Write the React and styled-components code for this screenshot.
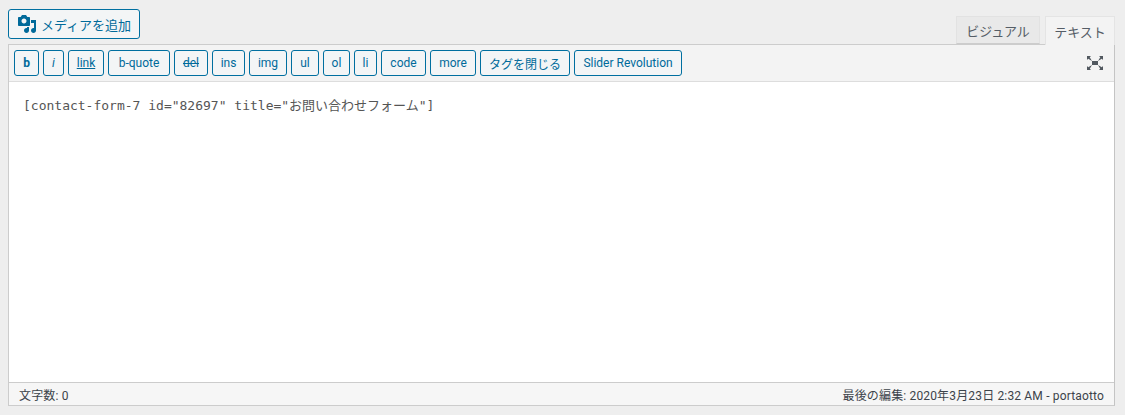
import React from "react";
import styled, { createGlobalStyle } from "styled-components";

const GlobalStyle = createGlobalStyle`
  html, body {
    margin: 0;
    padding: 0;
    background: #eeeeee;
  }
`;

const sans = `Roboto, "Liberation Sans", "Noto Sans CJK JP", sans-serif`;

const Page = styled.div`
  box-sizing: border-box;
  width: 1125px;
  height: 415px;
  padding: 10px 10px 9px 8px;
  background: #eeeeee;
  font-family: ${sans};
  display: flex;
  flex-direction: column;
`;

const TopBar = styled.div`
  display: flex;
  justify-content: space-between;
  align-items: flex-end;
  height: 34px;
`;

const MediaButton = styled.button`
  box-sizing: border-box;
  display: flex;
  align-items: center;
  gap: 4px;
  width: 132px;
  height: 30px;
  margin-bottom: 5px;
  padding: 0 0 0 8px;
  background: #f3f5f6;
  border: 1px solid #006fa0;
  border-radius: 3px;
  color: #006a9a;
  font-family: inherit;
  font-size: 13px;
  svg {
    width: 20px;
    height: 20px;
    fill: #006a9a;
  }
`;

const Tabs = styled.div`
  display: flex;
  gap: 5px;
  position: relative;
  top: 1px;
`;

const Tab = styled.div`
  box-sizing: border-box;
  width: ${(p) => p.$width}px;
  height: ${(p) => (p.$active ? 29 : 28)}px;
  margin-bottom: ${(p) => (p.$active ? 0 : 1)}px;
  display: flex;
  align-items: center;
  justify-content: center;
  border: 1px solid ${(p) => (p.$active ? "#e4e4e4" : "#e2e2e2")};
  border-bottom: ${(p) => (p.$active ? "none" : "1px solid #cccccc")};
  background: ${(p) => (p.$active ? "#f3f3f3" : "#e9e9e9")};
  color: #555d66;
  font-size: 13px;
`;

const Editor = styled.div`
  box-sizing: border-box;
  flex: 1;
  border: 1px solid #cccccc;
  border-right-color: #c4c4c4;
  display: flex;
  flex-direction: column;
  background: #ffffff;
`;

const Toolbar = styled.div`
  box-sizing: border-box;
  height: 37px;
  padding: 5px 0 0 5px;
  display: flex;
  gap: 4px;
  align-items: flex-start;
  background: #f3f3f3;
  border-bottom: 1px solid #dddddd;
`;

const QButton = styled.button`
  box-sizing: border-box;
  width: ${(p) => p.$width}px;
  height: 26px;
  padding: 0;
  background: #f3f5f6;
  border: 1px solid #006fa0;
  border-radius: 3px;
  color: #006a9a;
  font-family: inherit;
  font-size: 12px;
  font-weight: ${(p) => (p.$bold ? 700 : 400)};
  font-style: ${(p) => (p.$italic ? "italic" : "normal")};
  text-decoration: ${(p) => p.$line || "none"};
`;

const ExpandButton = styled.div`
  margin-left: auto;
  margin-right: 9px;
  margin-top: 3px;
  svg {
    display: block;
    width: 20px;
    height: 20px;
    fill: #50575e;
  }
`;

const TextArea = styled.div`
  flex: 1;
  padding: 15px 14px;
  font-family: "DejaVu Sans Mono", "Noto Sans CJK JP", monospace;
  font-size: 13px;
  line-height: 18px;
  color: #555555;
`;

const StatusBar = styled.div`
  box-sizing: border-box;
  height: 23px;
  padding: 0 10px;
  display: flex;
  align-items: center;
  justify-content: space-between;
  background: #f6f6f6;
  border-top: 1px solid #cccccc;
  color: #3c434a;
  font-size: 12px;
  letter-spacing: 0.16px;
`;

const tags = [
  { label: "b", width: 25, bold: true },
  { label: "i", width: 21, italic: true },
  { label: "link", width: 36, line: "underline" },
  { label: "b-quote", width: 62 },
  { label: "del", width: 34, line: "line-through" },
  { label: "ins", width: 33 },
  { label: "img", width: 38 },
  { label: "ul", width: 28 },
  { label: "ol", width: 27 },
  { label: "li", width: 23 },
  { label: "code", width: 45 },
  { label: "more", width: 46 },
  { label: "タグを閉じる", width: 90 },
  { label: "Slider Revolution", width: 108 },
];

const App = () => {
  return (
    <Page>
      <GlobalStyle />
      <TopBar>
        <MediaButton>
          <svg viewBox="0 0 20 20">
            <path d="M13 11V4c0-.55-.45-1-1-1h-1.67L9 1H5L3.67 3H2c-.55 0-1 .45-1 1v7c0 .55.45 1 1 1h10c.55 0 1-.45 1-1zM7 4.5c1.38 0 2.5 1.12 2.5 2.5S8.38 9.5 7 9.5 4.5 8.38 4.5 7 5.62 4.5 7 4.5zM14 6h5v10.5c0 1.38-1.12 2.5-2.5 2.5S14 17.88 14 16.5s1.12-2.5 2.5-2.5c.17 0 .34.02.5.05V9h-3V6zm-4 8.05V13h2v3.5c0 1.38-1.12 2.5-2.5 2.5S7 17.88 7 16.5 8.12 14 9.5 14c.17 0 .34.02.5.05z" />
          </svg>
          メディアを追加
        </MediaButton>
        <Tabs>
          <Tab $width={84}>ビジュアル</Tab>
          <Tab $width={70} $active>テキスト</Tab>
        </Tabs>
      </TopBar>
      <Editor>
        <Toolbar>
          {tags.map((t) => (
            <QButton key={t.label} $width={t.width} $bold={t.bold} $italic={t.italic} $line={t.line}>
              {t.label}
            </QButton>
          ))}
          <ExpandButton>
            <svg viewBox="0 0 20 20">
              <path d="M7 8h6v4H7zm-5 5v4h4l-1.2-1.2L7 12l-3.8 2.2M14 17h4v-4l-1.2 1.2L13 12l2.2 3.8M14 3l1.3 1.3L13 8l3.8-2.2L18 7V3M6 3H2v4l1.2-1.2L7 8 4.7 4.3" />
            </svg>
          </ExpandButton>
        </Toolbar>
        <TextArea>[contact-form-7 id="82697" title="お問い合わせフォーム"]</TextArea>
        <StatusBar>
          <span>文字数: 0</span>
          <span>最後の編集: 2020年3月23日 2:32 AM - portaotto</span>
        </StatusBar>
      </Editor>
    </Page>
  );
};

export default App;
